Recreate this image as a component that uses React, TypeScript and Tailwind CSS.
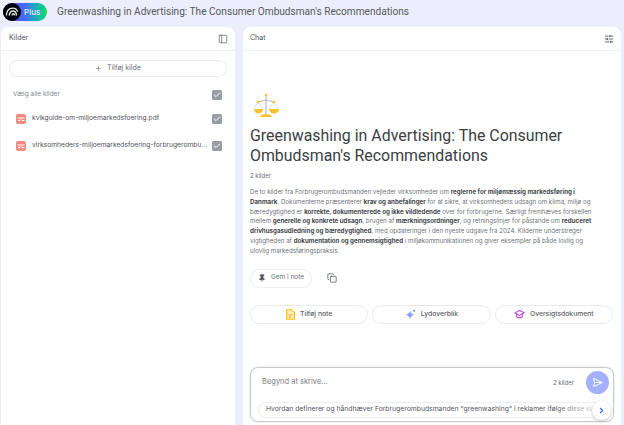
import { Copy, PanelLeft, Pin, Plus, SlidersHorizontal, Check, ChevronRight, SendHorizontal } from "lucide-react";

function Logo() {
  return (
    <div className="flex h-[18px] w-[44px] items-center rounded-full bg-gradient-to-r from-[#5b2ff0] via-[#3f6cf2] to-[#16dc5a]">
      <div className="grid h-[18px] w-[18px] shrink-0 place-items-center rounded-full bg-black">
        <svg viewBox="0 0 20 20" className="h-[14px] w-[14px]" fill="none" stroke="#e5e7eb" strokeWidth="2">
          <path d="M2 15C2.500 8 6 4.500 11 4.500c3.500 0 6 2 7 5" />
          <path d="M6 15c.5-4 2.500-6.500 5.500-6.500 2.500 0 4.500 2 5 6.500" />
          <path d="M10 15c.2-1.500 1-2.500 2-2.500s1.500 1 1.700 2.500" />
        </svg>
      </div>
      <span className="ml-[3px] text-[8px] leading-none font-medium text-[#e8ecff]">Plus</span>
    </div>
  );
}

function Box() {
  return (
    <span className="grid h-[10px] w-[10px] shrink-0 place-items-center rounded-[1.500px] bg-[#9a9ca3]">
      <Check className="h-[8px] w-[8px] text-white" strokeWidth={3} />
    </span>
  );
}

function PdfIcon() {
  return (
    <span className="grid h-[10px] w-[10px] shrink-0 place-items-center rounded-[2px] bg-[#f28b82]">
      <svg viewBox="0 0 10 10" className="h-[10px] w-[10px]" fill="none" stroke="#fff" strokeWidth="1">
        <path d="M1.500 4h7M2 6.500h2l1-1 1 1h2.500" />
      </svg>
    </span>
  );
}

function SourceRow({ name }: { name: string }) {
  return (
    <div className="flex h-[27px] items-center pr-[13px] pl-[15px]">
      <PdfIcon />
      <span className="ml-[6px] min-w-0 flex-1 truncate pr-[4px] text-[6.700px] text-[#50535a]">{name}</span>
      <Box />
    </div>
  );
}

function Action({ label, children }: { label: string; children: React.ReactNode }) {
  return (
    <button className="flex h-[19px] flex-1 items-center justify-center gap-[5px] rounded-full border border-[#e8eaed] bg-white text-[6.800px] font-medium text-[#5f6368]">
      {children}
      {label}
    </button>
  );
}

export default function App() {
  return (
    <div className="flex h-[425px] w-[624px] flex-col overflow-hidden bg-[#eceffb] font-['Inter',sans-serif]">
      <header className="flex h-[27px] shrink-0 items-center pb-[3px] pl-[3px]">
        <Logo />
        <h1 className="ml-[10px] font-['Roboto',sans-serif] text-[10.100px] text-[#55585e]">
          Greenwashing in Advertising: The Consumer Ombudsman's Recommendations
        </h1>
      </header>
      <div className="flex min-h-0 flex-1 gap-[8px] pr-[3px] pl-[1px]">
        <aside className="flex w-[234px] shrink-0 flex-col rounded-t-[8px] bg-white">
          <div className="flex h-[24px] items-center justify-between border-b border-[#eef0f2] pr-[7px] pl-[8px]">
            <span className="text-[7px] text-[#4a5568]">Kilder</span>
            <PanelLeft className="h-[10px] w-[10px] text-[#4a4d52]" strokeWidth={1.500} />
          </div>
          <div className="px-[8px] pt-[9px]">
            <button className="flex h-[17px] w-full items-center justify-center gap-[5px] rounded-full border border-[#e8eaed] text-[7px] text-[#6b6f76]">
              <Plus className="h-[7px] w-[7px]" />
              Tilføj kilde
            </button>
          </div>
          <div className="flex h-[28px] items-center justify-between pt-[8px] pr-[13px] pl-[12px]">
            <span className="text-[6.500px] text-[#85888e]">Vælg alle kilder</span>
            <Box />
          </div>
          <SourceRow name="kvikguide-om-miljoemarkedsfoering.pdf" />
          <SourceRow name="virksomheders-miljoemarkedsfoering-forbrugerombudsmanden.pdf" />
        </aside>
        <main className="flex min-w-0 flex-1 flex-col rounded-t-[8px] bg-white">
          <div className="flex h-[24px] items-center justify-between border-b border-[#eef0f2] pr-[7px] pl-[7px]">
            <span className="text-[7px] text-[#4a5568]">Chat</span>
            <SlidersHorizontal className="h-[10px] w-[10px] text-[#4a4d52]" />
          </div>
          <div className="flex flex-1 flex-col px-[7px]">
            <svg viewBox="0 0 30 26" className="mt-[42px] ml-[2px] h-[26px] w-[30px]" fill="none">
              <path d="M14 2v20" stroke="#b9bcc2" strokeWidth="1.200" />
              <path d="M14 7 6 9M14 7l8 2" stroke="#b9bcc2" strokeWidth="1.200" />
              <path d="M6 9 2 16M6 9l5 7M22 9l-5 7M22 9l5 7" stroke="#cfd2d6" strokeWidth=".7" />
              <path d="M2 16h9a4.500 4.500 0 0 1-9 0ZM17 16h10a5 4.500 0 0 1-10 0ZM8 24c.5-2 3-3 6-3s5.500 1 6 3Z" fill="#fbc02d" />
              <circle cx="14" cy="2" r="1.300" fill="#fbc02d" />
              <circle cx="6" cy="9" r="1.300" fill="#fbc02d" />
              <circle cx="22" cy="9" r="1.300" fill="#fbc02d" />
            </svg>
            <h2 className="mt-[7px] font-['Roboto',sans-serif] text-[15.900px] leading-[19.500px] text-[#3c4043]">
              Greenwashing in Advertising: The Consumer Ombudsman's Recommendations
            </h2>
            <p className="mt-[6px] text-[6px] text-[#6b6f76]">2 kilder</p>
            <p className="mt-[7px] pr-[14px] text-[6.200px] leading-[9.800px] text-[#6f7378]">
              De to kilder fra Forbrugerombudsmanden vejleder virksomheder om <b className="text-[#45484c]">reglerne for miljømæssig markedsføring i Danmark</b>. Dokumenterne præsenterer <b className="text-[#45484c]">krav og anbefalinger</b> for at sikre, at virksomheders udsagn om klima, miljø og bæredygtighed er <b className="text-[#45484c]">korrekte, dokumenterede og ikke vildledende</b> over for forbrugerne. Særligt fremhæves forskellen mellem <b className="text-[#45484c]">generelle og konkrete udsagn</b>, brugen af <b className="text-[#45484c]">mærkningsordninger</b>, og retningslinjer for påstande om <b className="text-[#45484c]">reduceret drivhusgasudledning og bæredygtighed</b>, med opdateringer i den nyeste udgave fra 2024. Kilderne understreger vigtigheden af <b className="text-[#45484c]">dokumentation og gennemsigtighed</b> i miljøkommunikationen og giver eksempler på både lovlig og ulovlig markedsføringspraksis.
            </p>
            <div className="mt-[13px] flex items-center gap-[15px]">
              <button className="flex h-[19px] w-[62px] items-center justify-center gap-[5px] rounded-full border border-[#eceef0] text-[6.500px] text-[#6b6f76]">
                <Pin className="h-[8px] w-[8px] fill-[#55585e] text-[#55585e]" />
                Gem i note
              </button>
              <Copy className="h-[10px] w-[10px] text-[#5f6368]" />
            </div>
            <div className="mt-[17px] flex gap-[4px] pr-[1px]">
              <Action label="Tilføj note">
                <svg viewBox="0 0 10 12" className="h-[11px] w-[9px]">
                  <path d="M1.500.7h4.800l3 3v6.800a.8.800 0 0 1-.8.800h-7a.8.800 0 0 1-.8-.8V1.500a.8.800 0 0 1 .8-.8Z" fill="#feefc3" stroke="#fbbc04" strokeWidth="1.300" />
                  <path d="M3 6h4v1H3zM3 8.500h2.500v1H3z" fill="#e2a300" />
                </svg>
              </Action>
              <Action label="Lydoverblik">
                <svg viewBox="0 0 12 12" className="h-[11px] w-[11px]">
                  <path d="M5.500 1.500c.7 2.800 2 4 4.800 4.700-2.800.7-4.100 2-4.800 4.800-.7-2.800-2-4.100-4.800-4.800 2.800-.7 4.100-1.900 4.800-4.700Z" fill="#8c9eff" />
                  <path d="M10 .2c.2 1 .7 1.500 1.800 1.800-1.100.2-1.600.7-1.800 1.800-.2-1.100-.7-1.600-1.800-1.800 1.100-.3 1.600-.8 1.800-1.800Z" fill="#536dfe" />
                </svg>
              </Action>
              <Action label="Oversigtsdokument">
                <svg viewBox="0 0 12 12" className="h-[11px] w-[11px]" fill="none" stroke="#c04fe8" strokeWidth="1.300">
                  <path d="M6 1.500 11 4.200 6 7 1 4.200Z" />
                  <path d="M3 5.500v3c1.800 1.500 4.200 1.500 6 0v-3" />
                </svg>
              </Action>
            </div>
            <div className="relative mt-[43px] flex h-[55px] flex-col rounded-[8px] border border-[#c9cbce] px-[7px] pt-[3px] shadow-[0_0_2px_rgba(0,0,0,0.2)]">
              <div className="flex items-center">
                <span className="flex-1 pl-[4px] text-[7.500px] text-[#7b7e84]">Begynd at skrive...</span>
                <span className="mr-[12px] text-[6px] text-[#6b6f76]">2 kilder</span>
                <span className="-mr-[3px] grid h-[23px] w-[23px] place-items-center rounded-full bg-[#a4b0fb]">
                  <SendHorizontal className="h-[11px] w-[11px] text-white" />
                </span>
              </div>
              <div className="relative mt-[8px] flex h-[16px] items-center overflow-hidden rounded-full border border-[#eceef0] pl-[7px]">
                <span className="whitespace-nowrap text-[6.800px] text-[#55585e]">
                  Hvordan definerer og håndhæver Forbrugerombudsmanden "greenwashing" i reklamer ifølge disse kilder?
                </span>
                <span className="absolute top-0 right-0 bottom-0 w-[50px] bg-gradient-to-r from-transparent to-white" />
              </div>
              <span className="absolute right-[2px] bottom-[1px] grid h-[19px] w-[19px] place-items-center rounded-full bg-white shadow-[0_1px_3px_rgba(0,0,0,0.25)]">
                <ChevronRight className="h-[9px] w-[9px] text-[#2f6fed]" strokeWidth={3} />
              </span>
            </div>
          </div>
        </main>
      </div>
    </div>
  );
}
